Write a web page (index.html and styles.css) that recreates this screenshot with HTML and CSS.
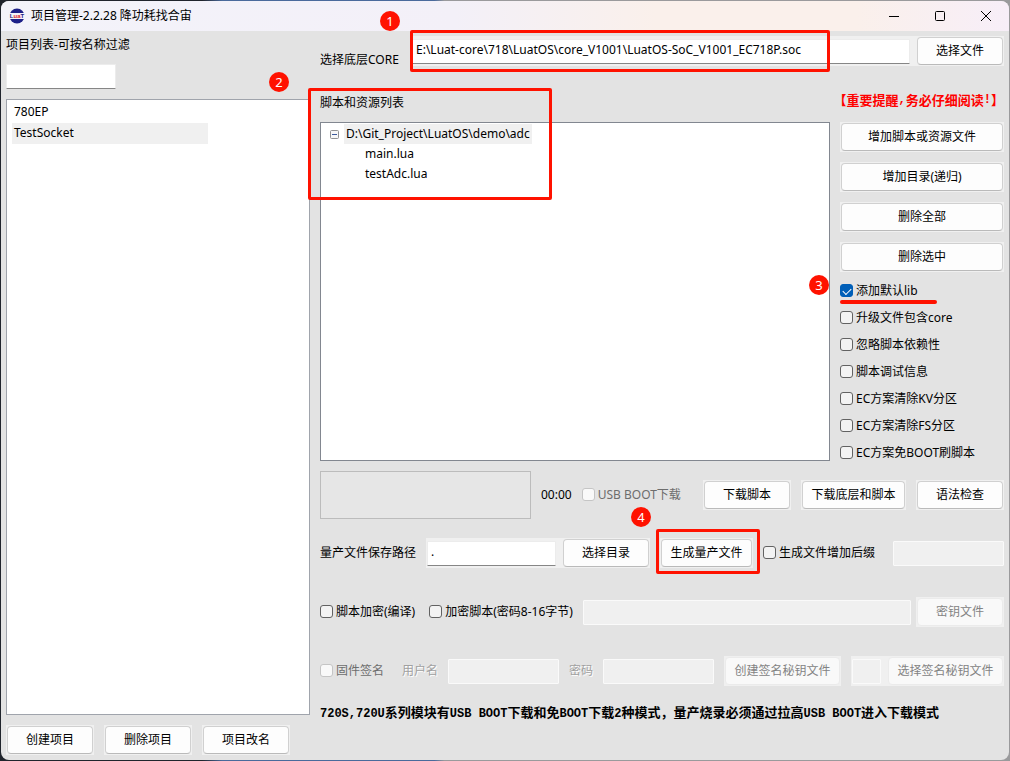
FILE: index.html
```html
<!DOCTYPE html>
<html lang="zh-CN">

    <head>
        <meta charset="UTF-8">
        <title>项目管理</title>
        <link rel="stylesheet" href="styles.css">
    </head>

    <body>
        <div class="window">
            <header class="titlebar">
                <svg class="logo" viewBox="0 0 16 16" aria-hidden="true">
                    <circle cx="8" cy="8" r="7.5" fill="#1d2088"/>
                    <rect x="0" y="5" width="16" height="6" rx="1" fill="#f3f3fa"/>
                    <text x="8" y="10" text-anchor="middle" class="logo-text">L<tspan fill="#d22">ua</tspan>T</text>
                </svg>
                <h1 class="title">项目管理-2.2.28 降功耗找合宙</h1>
                <span class="badge badge-1">1</span>
                <div class="window-buttons">
                    <button type="button" class="window-button" aria-label="最小化">
                        <svg viewBox="0 0 12 12"><path d="M1 6.5h10"/></svg>
                    </button>
                    <button type="button" class="window-button" aria-label="最大化">
                        <svg viewBox="0 0 12 12"><rect x="1.5" y="1.5" width="9" height="9" rx="1"/></svg>
                    </button>
                    <button type="button" class="window-button" aria-label="关闭">
                        <svg viewBox="0 0 12 12"><path d="M1 1l10 10M11 1L1 11"/></svg>
                    </button>
                </div>
            </header>

            <main class="content">
                <aside class="projects">
                    <label class="projects-label" for="filter">项目列表-可按名称过滤</label>
                    <input type="text" id="filter" class="field filter">
                    <ul class="project-list">
                        <li class="project">780EP</li>
                        <li class="project selected">TestSocket</li>
                    </ul>
                    <div class="project-actions">
                        <span class="cell"><button type="button" class="btn">创建项目</button></span>
                        <span class="cell"><button type="button" class="btn">删除项目</button></span>
                        <span class="cell"><button type="button" class="btn">项目改名</button></span>
                    </div>
                </aside>

                <section class="settings">
                    <div class="core-row">
                        <label class="core-label" for="core">选择底层CORE</label>
                        <div class="strip core-strip">
                            <input type="text" id="core" class="field grow" value="E:\Luat-core\718\LuatOS\core_V1001\LuatOS-SoC_V1001_EC718P.soc">
                            <button type="button" class="btn btn-fixed">选择文件</button>
                            <span class="mark mark-core"></span>
                        </div>
                    </div>

                    <div class="files">
                        <div class="scripts">
                            <h2 class="scripts-title">脚本和资源列表</h2>
                            <div class="tree">
                                <div class="tree-root">
                                    <svg class="toggle" viewBox="0 0 9 9" aria-hidden="true">
                                        <rect x="0.5" y="0.5" width="8" height="8" rx="1" fill="#f7f7f7" stroke="#919191"/>
                                        <path d="M2 4.5h5" stroke="#3c5a9c"/>
                                    </svg>
                                    <span class="tree-path">D:\Git_Project\LuatOS\demo\adc</span>
                                </div>
                                <ul class="tree-files">
                                    <li>main.lua</li>
                                    <li>testAdc.lua</li>
                                </ul>
                            </div>
                            <span class="badge badge-2">2</span>
                            <span class="mark mark-scripts"></span>
                        </div>

                        <div class="tools">
                            <p class="warning">【重要提醒<span>,</span>务必仔细阅读<span>!</span>】</p>
                            <div class="tool-buttons">
                                <span class="cell"><button type="button" class="btn">增加脚本或资源文件</button></span>
                                <span class="cell"><button type="button" class="btn">增加目录(递归)</button></span>
                                <span class="cell"><button type="button" class="btn">删除全部</button></span>
                                <span class="cell"><button type="button" class="btn">删除选中</button></span>
                            </div>
                            <div class="options">
                                <div class="option-marked">
                                    <label class="check"><input type="checkbox" checked>添加默认lib</label>
                                    <span class="badge badge-3">3</span>
                                    <span class="underline"></span>
                                </div>
                                <label class="check"><input type="checkbox">升级文件包含core</label>
                                <label class="check"><input type="checkbox">忽略脚本依赖性</label>
                                <label class="check"><input type="checkbox">脚本调试信息</label>
                                <label class="check"><input type="checkbox">EC方案清除KV分区</label>
                                <label class="check"><input type="checkbox">EC方案清除FS分区</label>
                                <label class="check"><input type="checkbox">EC方案免BOOT刷脚本</label>
                            </div>
                        </div>
                    </div>

                    <div class="row download-row">
                        <div class="progress"></div>
                        <span class="timer">00:00</span>
                        <label class="check disabled"><input type="checkbox" disabled>USB BOOT下载</label>
                        <div class="download-buttons">
                            <span class="cell"><button type="button" class="btn">下载脚本</button></span>
                            <span class="cell wide"><button type="button" class="btn">下载底层和脚本</button></span>
                            <span class="cell"><button type="button" class="btn">语法检查</button></span>
                        </div>
                    </div>

                    <div class="row output-row">
                        <label class="output-label" for="output">量产文件保存路径</label>
                        <div class="strip output-strip">
                            <input type="text" id="output" class="field grow" value=".">
                            <button type="button" class="btn btn-fixed">选择目录</button>
                        </div>
                        <div class="cell generate">
                            <button type="button" class="btn">生成量产文件</button>
                            <span class="badge badge-4">4</span>
                            <span class="mark mark-generate"></span>
                        </div>
                        <label class="check"><input type="checkbox">生成文件增加后缀</label>
                        <input type="text" class="field suffix" aria-label="后缀" disabled>
                    </div>

                    <div class="row encrypt-row">
                        <label class="check"><input type="checkbox">脚本加密(编译)</label>
                        <label class="check"><input type="checkbox">加密脚本(密码8-16字节)</label>
                        <input type="text" class="field key" aria-label="脚本密码" disabled>
                        <span class="cell"><button type="button" class="btn" disabled>密钥文件</button></span>
                    </div>

                    <div class="row sign-row">
                        <label class="check disabled sign-check"><input type="checkbox" disabled>固件签名</label>
                        <label class="muted" for="user">用户名</label>
                        <input type="text" id="user" class="field credential" disabled>
                        <label class="muted" for="password">密码</label>
                        <input type="password" id="password" class="field credential" disabled>
                        <span class="cell create-sign"><button type="button" class="btn" disabled>创建签名秘钥文件</button></span>
                        <div class="strip sign-strip">
                            <input type="text" class="field grow" aria-label="签名秘钥" disabled>
                            <button type="button" class="btn" disabled>选择签名秘钥文件</button>
                        </div>
                    </div>

                    <p class="notice"><span>720S,720U</span>系列模块有<span>USB BOOT</span>下载和免<span>BOOT</span>下载<span>2</span>种模式，量产烧录必须通过拉高<span>USB BOOT</span>进入下载模式</p>
                </section>
            </main>
        </div>
    </body>

</html>
```
FILE: styles.css
```css
* {
    padding: 0;
    margin: 0;
    box-sizing: border-box;
}

body {
    min-height: 100vh;
    padding: 1px;
    display: flex;
    background: linear-gradient(to right, #20242c 0, #20242c 20%, #4a6a9c 22%, #4a6a9c 43%, #9a9a9c 44%);
}

body,
button,
input {
    font-family: "Noto Sans", "Noto Sans CJK SC", sans-serif;
    font-size: 12px;
    line-height: 20px;
    color: #000;
}

.window {
    flex: 1;
    min-width: 0;
    display: flex;
    flex-direction: column;
    border-radius: 8px;
    background-color: #e3e3e3;
}

/* title bar */

.titlebar {
    position: relative;
    height: 30px;
    display: flex;
    align-items: center;
    padding-left: 8px;
    border-radius: 8px 8px 0 0;
    background: linear-gradient(to right, #f3f3fa 0, #f3f0f8 45%, #faf0eb 65%, #faf0eb 85%, #f7eef8 100%);
}

.logo {
    width: 16px;
    height: 16px;
    margin-right: 6px;
}

.logo-text {
    font: bold 6px "Liberation Sans", sans-serif;
    fill: #1d2088;
}

.title {
    font-size: 12px;
    font-weight: normal;
}

.window-buttons {
    margin-left: auto;
    display: flex;
}

.window-button {
    width: 46px;
    height: 30px;
    display: flex;
    align-items: center;
    justify-content: center;
    border: none;
    background: none;
}

.window-button svg {
    width: 12px;
    height: 12px;
    fill: none;
    stroke: #000;
}

/* shared controls */

.field {
    height: 25px;
    min-width: 0;
    padding: 0 3px 3px;
    border: 1px solid #ececec;
    border-bottom-color: #868686;
    border-radius: 1px;
    background-color: #fff;
}

.field:disabled {
    border: 1px solid #fafafa;
    background-color: #f0f0f0;
}

.grow {
    flex: 1;
    width: 0;
}

.cell,
.strip {
    height: 30px;
    padding: 1px;
    display: flex;
    align-items: center;
    background-color: #f0f0f0;
}

.cell {
    flex: none;
    width: 88px;
}

.strip {
    gap: 7px;
}

.btn {
    height: 28px;
    border: 1px solid #d0d0d0;
    border-bottom-color: #bababa;
    border-radius: 4px;
    background-color: #fdfdfd;
    white-space: nowrap;
}

.cell .btn {
    width: 100%;
}

.btn-fixed {
    width: 86px;
}

.btn:disabled {
    border-color: #ebebeb;
    background-color: #f9f9f9;
    color: #838383;
}

.check {
    height: 16px;
    display: flex;
    align-items: center;
    gap: 3px;
    white-space: nowrap;
}

.check input {
    appearance: none;
    width: 13px;
    height: 13px;
    margin-bottom: 1px;
    border: 1px solid #626262;
    border-radius: 3px;
    background-color: #f3f3f3;
}

.check input:checked {
    border-color: #005fb8;
    background-color: #005fb8;
}

.check input:checked::after {
    content: "";
    display: block;
    width: 7px;
    height: 4px;
    margin: 3px 2px;
    border-left: 1px solid #fff;
    border-bottom: 1px solid #fff;
    transform: rotate(-45deg);
}

.check input:disabled {
    border-color: #c5c5c5;
    background-color: #f9f9f9;
}

.check.disabled {
    color: #6d6d6d;
}

.muted {
    color: #a0a0a0;
    text-shadow: 1px 1px 0 #fff;
    white-space: nowrap;
}

/* red annotations */

.badge {
    position: absolute;
    width: 20px;
    height: 20px;
    border-radius: 50%;
    background-color: #ff1200;
    color: #fff;
    font-size: 13px;
    text-align: center;
}

.mark {
    position: absolute;
    border: 3px solid #ff1200;
    border-radius: 2px;
    pointer-events: none;
}

.badge-1 {
    left: 379px;
    top: 10px;
}

.badge-2 {
    left: -51px;
    top: 6px;
}

.badge-3 {
    left: -31px;
    top: -8px;
}

.badge-4 {
    left: -29px;
    top: -31px;
}

.mark-core {
    left: -1px;
    top: -6px;
    width: 420px;
    height: 42px;
}

.mark-scripts {
    left: -12px;
    top: 22px;
    width: 244px;
    height: 112px;
}

.mark-generate {
    left: -4px;
    top: -9px;
    right: -7px;
    bottom: -6px;
}

.underline {
    position: absolute;
    left: 0;
    top: 17px;
    width: 97px;
    height: 4px;
    border-radius: 2px;
    background-color: #ff1200;
}

/* project list */

.content {
    flex: 1;
    display: flex;
    gap: 10px;
    padding: 5px;
}

.projects {
    width: 304px;
    flex: none;
    display: flex;
    flex-direction: column;
}

.projects-label {
    height: 28px;
    line-height: 18px;
}

.filter {
    width: 110px;
    margin-bottom: 10px;
}

.project-list {
    flex: 1;
    padding: 2px 5px;
    border: 1px solid #a0a4ac;
    background-color: #fff;
    list-style: none;
}

.project {
    width: 196px;
    height: 21px;
    padding-left: 2px;
}

.project.selected {
    background-color: #f0f0f0;
}

.project-actions {
    display: flex;
    gap: 10px;
    margin-top: 10px;
}

/* settings */

.settings {
    flex: 1;
    min-width: 0;
}

.core-row {
    height: 30px;
    display: flex;
}

.core-label {
    width: 91px;
    padding-top: 14px;
}

.core-strip {
    position: relative;
    flex: 1;
}

.files {
    display: flex;
    gap: 10px;
}

.scripts {
    position: relative;
    flex: 1;
    display: flex;
    flex-direction: column;
}

.scripts-title {
    height: 56px;
    padding-top: 27px;
    font-size: 12px;
    font-weight: normal;
}

.tree {
    flex: 1;
    padding: 1px 9px;
    border: 1px solid #828790;
    background-color: #fff;
}

.tree-root {
    display: flex;
    align-items: center;
    gap: 5px;
}

.toggle {
    width: 9px;
    height: 9px;
}

.tree-path {
    padding: 0 2px;
    background-color: #f0f0f0;
}

.tree-files {
    padding-left: 35px;
    list-style: none;
}

.tools {
    width: 164px;
    flex: none;
}

.warning,
.notice {
    font-family: "Noto Sans CJK SC", sans-serif;
    font-size: 13px;
    font-weight: bold;
    white-space: nowrap;
}

.warning span,
.notice span {
    font-family: "Liberation Mono", monospace;
    font-size: 12px;
}

.warning {
    height: 56px;
    display: flex;
    justify-content: flex-end;
    padding-top: 24px;
    color: #f00;
}

.tool-buttons {
    display: flex;
    flex-direction: column;
    gap: 10px;
}

.tool-buttons .cell {
    width: 100%;
}

.options {
    display: flex;
    flex-direction: column;
    gap: 11px;
    margin-top: 11px;
}

.option-marked {
    position: relative;
}

.row {
    display: flex;
    align-items: center;
}

.download-row {
    gap: 10px;
    margin-top: 10px;
}

.progress {
    width: 211px;
    height: 48px;
    border: 1px solid #bcbcbc;
    background-color: #e6e6e6;
}

.download-buttons {
    display: flex;
    gap: 10px;
    margin-left: auto;
}

.wide {
    width: 105px;
}

.output-row {
    margin-top: 19px;
}

.output-label {
    width: 106px;
}

.output-strip {
    width: 224px;
}

.generate {
    position: relative;
    width: 93px;
    margin: 0 10px;
}

.suffix {
    width: 111px;
    margin-left: auto;
}

.encrypt-row {
    margin-top: 29px;
}

.encrypt-row .check {
    margin-right: 14px;
}

.key {
    flex: 1;
    margin-right: 5px;
}

.encrypt-row .check:nth-child(2) {
    margin-right: 10px;
}

.sign-row {
    gap: 10px;
    margin-top: 29px;
}

.sign-check {
    margin-right: 8px;
}

.credential {
    width: 111px;
}

.create-sign {
    width: 117px;
}

.sign-strip {
    flex: 1;
}

.sign-strip .btn {
    width: 115px;
}

.notice {
    margin-top: 16px;
}
```
